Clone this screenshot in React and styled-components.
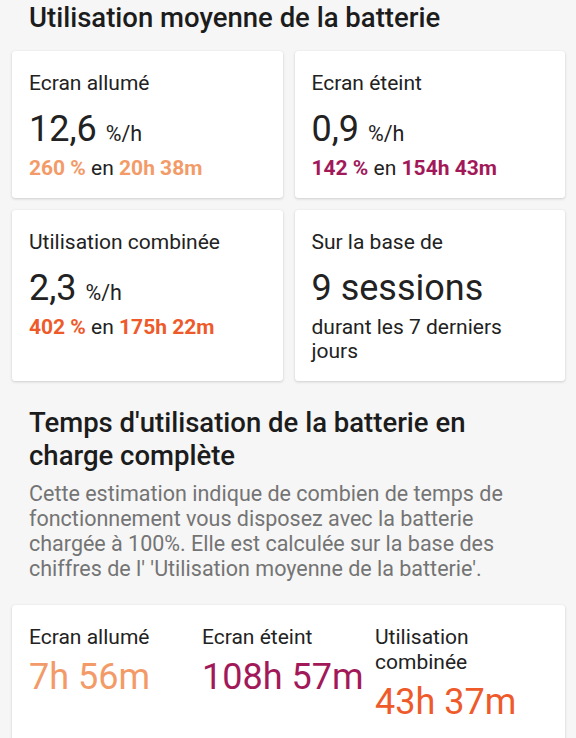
import React from "react";
import styled, { createGlobalStyle } from "styled-components";

const GlobalStyle = createGlobalStyle`
  html, body { margin: 0; padding: 0; background: #f6f6f6; }
  body { font-family: Roboto, "Noto Sans", "Liberation Sans", sans-serif; color: #212121; }
  * { box-sizing: border-box; }
`;

const Page = styled.div`
  padding: 1px 11px 0 12px;
  height: 738px;
  overflow: hidden;
`;

const SectionTitle = styled.h2`
  margin: 0;
  padding: 0 17px;
  font-size: 27.5px;
  line-height: 33px;
  font-weight: 500;
  color: #1c1c1c;
  margin-top: ${(p) => p.$mt || 0}px;
`;

const Grid = styled.div`
  display: grid;
  grid-template-columns: 1fr 1fr;
  gap: 12px;
  margin-top: 17px;
`;

const Card = styled.div`
  background: #fff;
  border-radius: 3px;
  box-shadow: 0 1px 3px rgba(0, 0, 0, 0.16), 0 0 1px rgba(0, 0, 0, 0.08);
  padding: 20px 17px 18px 17px;
`;

const Label = styled.div`
  font-size: 21px;
  line-height: 25px;
  color: #222;
`;

const Value = styled.div`
  font-size: 36px;
  line-height: 43px;
  height: 43px;
  color: #222;
  margin-top: 12px;
`;

const Unit = styled.span`
  font-size: 21.5px;
  line-height: 1;
`;

const Sub = styled.div`
  font-size: 21px;
  line-height: 24px;
  margin-top: 5px;
  color: #222;
`;

const Hl = styled.span`
  font-weight: 700;
  color: ${(p) => p.$c};
`;

const Paragraph = styled.p`
  margin: 9px 0 0 0;
  padding: 0 17px;
  font-size: 21.5px;
  line-height: 25px;
  color: #747474;
`;

const BottomCard = styled(Card)`
  margin-top: 24px;
  display: grid;
  grid-template-columns: repeat(3, 1fr);
  min-height: 160px;
`;

const Col = styled.div`
  display: flex;
  flex-direction: column;
`;

const BigTime = styled.div`
  font-size: 36px;
  line-height: 43px;
  margin-top: 6px;
  color: ${(p) => p.$c};
  white-space: nowrap;
`;

const C1 = "#f39b68";
const C2 = "#a2195a";
const C3 = "#ee5a2a";

export default function App() {
  return (
    <>
      <GlobalStyle />
      <Page>
        <SectionTitle>Utilisation moyenne de la batterie</SectionTitle>
        <Grid>
          <Card>
            <Label>Ecran allumé</Label>
            <Value>
              12,6 <Unit>%/h</Unit>
            </Value>
            <Sub>
              <Hl $c={C1}>260 %</Hl> en <Hl $c={C1}>20h 38m</Hl>
            </Sub>
          </Card>
          <Card>
            <Label>Ecran éteint</Label>
            <Value>
              0,9 <Unit>%/h</Unit>
            </Value>
            <Sub>
              <Hl $c={C2}>142 %</Hl> en <Hl $c={C2}>154h 43m</Hl>
            </Sub>
          </Card>
          <Card>
            <Label>Utilisation combinée</Label>
            <Value>
              2,3 <Unit>%/h</Unit>
            </Value>
            <Sub>
              <Hl $c={C3}>402 %</Hl> en <Hl $c={C3}>175h 22m</Hl>
            </Sub>
          </Card>
          <Card>
            <Label>Sur la base de</Label>
            <Value>9 sessions</Value>
            <Sub>durant les 7 derniers jours</Sub>
          </Card>
        </Grid>
        <SectionTitle $mt={25}>
          Temps d'utilisation de la batterie en charge complète
        </SectionTitle>
        <Paragraph>
          Cette estimation indique de combien de temps de fonctionnement vous
          disposez avec la batterie chargée à 100%. Elle est calculée sur la
          base des chiffres de l' 'Utilisation moyenne de la batterie'.
        </Paragraph>
        <BottomCard>
          <Col>
            <Label>Ecran allumé</Label>
            <BigTime $c={C1}>7h 56m</BigTime>
          </Col>
          <Col>
            <Label>Ecran éteint</Label>
            <BigTime $c={C2}>108h 57m</BigTime>
          </Col>
          <Col>
            <Label>
              Utilisation
              <br />
              combinée
            </Label>
            <BigTime $c={C3}>43h 37m</BigTime>
          </Col>
        </BottomCard>
      </Page>
    </>
  );
}
